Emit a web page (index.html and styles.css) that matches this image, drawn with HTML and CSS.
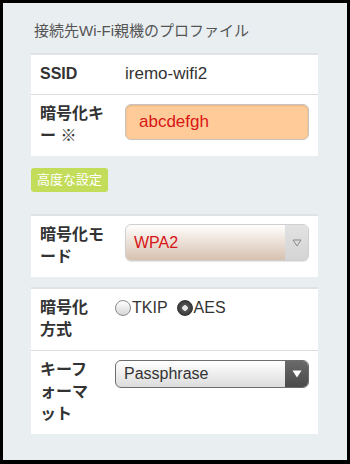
FILE: index.html
```html
<!DOCTYPE html>
<html lang="ja">
<head>
<meta charset="utf-8">
<title>プロファイル</title>
<link rel="stylesheet" href="styles.css">
</head>
<body>
<div class="screen">
  <h1 class="title">接続先Wi-Fi親機のプロファイル</h1>

  <div class="card">
    <div class="row">
      <div class="label">SSID</div>
      <div class="value text-value">iremo-wifi2</div>
    </div>
    <div class="row">
      <div class="label">暗号化キー ※</div>
      <div class="value"><div class="input-key">abcdefgh</div></div>
    </div>
  </div>

  <div class="btn-advanced">高度な設定</div>

  <div class="card card-mode">
    <div class="row">
      <div class="label">暗号化モード</div>
      <div class="value">
        <div class="select select-tan">
          <span class="select-text">WPA2</span>
          <span class="select-arrow arrow-light">
            <svg width="10" height="8" viewBox="0 0 10 8"><path d="M1 1 L9 1 L5 7 Z" fill="none" stroke="#8a8a8a" stroke-width="1"/></svg>
          </span>
        </div>
      </div>
    </div>
  </div>

  <div class="card card-narrow">
    <div class="row">
      <div class="label label-narrow">暗号化方式</div>
      <div class="value radios">
        <span class="radio"></span><span class="radio-text">TKIP</span>
        <span class="radio radio-checked"></span><span class="radio-text">AES</span>
      </div>
    </div>
    <div class="row">
      <div class="label label-narrow">キーフォーマット</div>
      <div class="value">
        <div class="select select-gray">
          <span class="select-text">Passphrase</span>
          <span class="select-arrow arrow-dark">
            <svg width="10" height="8" viewBox="0 0 10 8"><path d="M0.5 0.5 L9.5 0.5 L5 7.5 Z" fill="#ffffff"/></svg>
          </span>
        </div>
      </div>
    </div>
  </div>
</div>
</body>
</html>
```

FILE: styles.css
```css
html, body {
  margin: 0;
  padding: 0;
  background: #000;
}

body {
  font-family: "Liberation Sans", "Noto Sans CJK JP", sans-serif;
  color: #333;
}

.screen {
  margin: 3px 3px 4px 3px;
  height: 457px;
  box-sizing: border-box;
  background: #e9eef1;
  padding: 17px 29px 0 28px;
  overflow: hidden;
}

.title {
  margin: 0 0 11px 3px;
  font-size: 15px;
  font-weight: normal;
  line-height: 22px;
  color: #555;
}

.card {
  background: #fff;
  border-top: 2px solid #dfe3e6;
}

.row {
  display: flex;
  align-items: flex-start;
  padding: 8px 9px 9px 9px;
}

.row + .row {
  border-top: 1px solid #dcdcdc;
}

.label {
  width: 85px;
  flex: none;
  font-size: 16px;
  font-weight: bold;
  line-height: 22px;
  color: #333;
  padding-right: 10px;
  box-sizing: border-box;
}

.label-narrow {
  width: 75px;
  padding-right: 22px;
}

.value {
  flex: 1;
  min-width: 0;
}

.text-value {
  font-size: 17px;
  line-height: 22px;
  color: #333;
}

.input-key {
  height: 36px;
  box-sizing: border-box;
  margin-top: 1px;
  background: #ffcc99;
  border: 1px solid #c9c3bd;
  border-radius: 6px;
  box-shadow: inset 0 1px 2px rgba(0, 0, 0, 0.12);
  padding-left: 13px;
  font-size: 17px;
  line-height: 34px;
  color: #d81515;
}

.btn-advanced {
  display: inline-block;
  margin: 12px 0 22px 0;
  padding: 0 6px;
  height: 24px;
  line-height: 24px;
  background: #c3dc5a;
  border-radius: 3px;
  color: #fff;
  font-size: 13px;
}

.card-mode {
  margin-bottom: 10px;
}

.select {
  display: flex;
  box-sizing: border-box;
  border-radius: 6px;
  overflow: hidden;
}

.select-text {
  flex: 1;
  font-size: 16px;
  padding-left: 8px;
}

.select-arrow {
  flex: none;
  width: 23px;
  display: flex;
  align-items: center;
  justify-content: center;
}

.select-tan {
  height: 37px;
  border: 1px solid #cfcfcf;
  background: linear-gradient(#fffefd, #d7c1af);
  box-shadow: 0 1px 1px rgba(0, 0, 0, 0.1);
}

.select-tan .select-text {
  line-height: 35px;
  color: #d81515;
}

.arrow-light {
  background: linear-gradient(#e2e2e2, #d4d4d4);
}

.select-gray {
  height: 28px;
  margin-top: 1px;
  border: 1px solid #6d6d6d;
  background: linear-gradient(#ffffff, #dcdcdc);
}

.select-gray .select-text {
  line-height: 26px;
  color: #333;
}

.arrow-dark {
  background: linear-gradient(#6a6a6a, #4a4a4a);
}

.radios {
  display: flex;
  align-items: center;
  height: 22px;
  font-size: 16px;
  color: #333;
}

.radio {
  width: 14px;
  height: 14px;
  border-radius: 50%;
  border: 1px solid #8a8a8a;
  background: linear-gradient(#ffffff, #d6d6d6);
  flex: none;
}

.radio-checked {
  border-color: #333;
  background: radial-gradient(circle at 50% 50%, #e6e6e6 0, #e6e6e6 2.5px, #555 3px, #3a3a3a 7px);
  margin-left: 9px;
}

.radio-text {
  margin-left: 1px;
}
```
